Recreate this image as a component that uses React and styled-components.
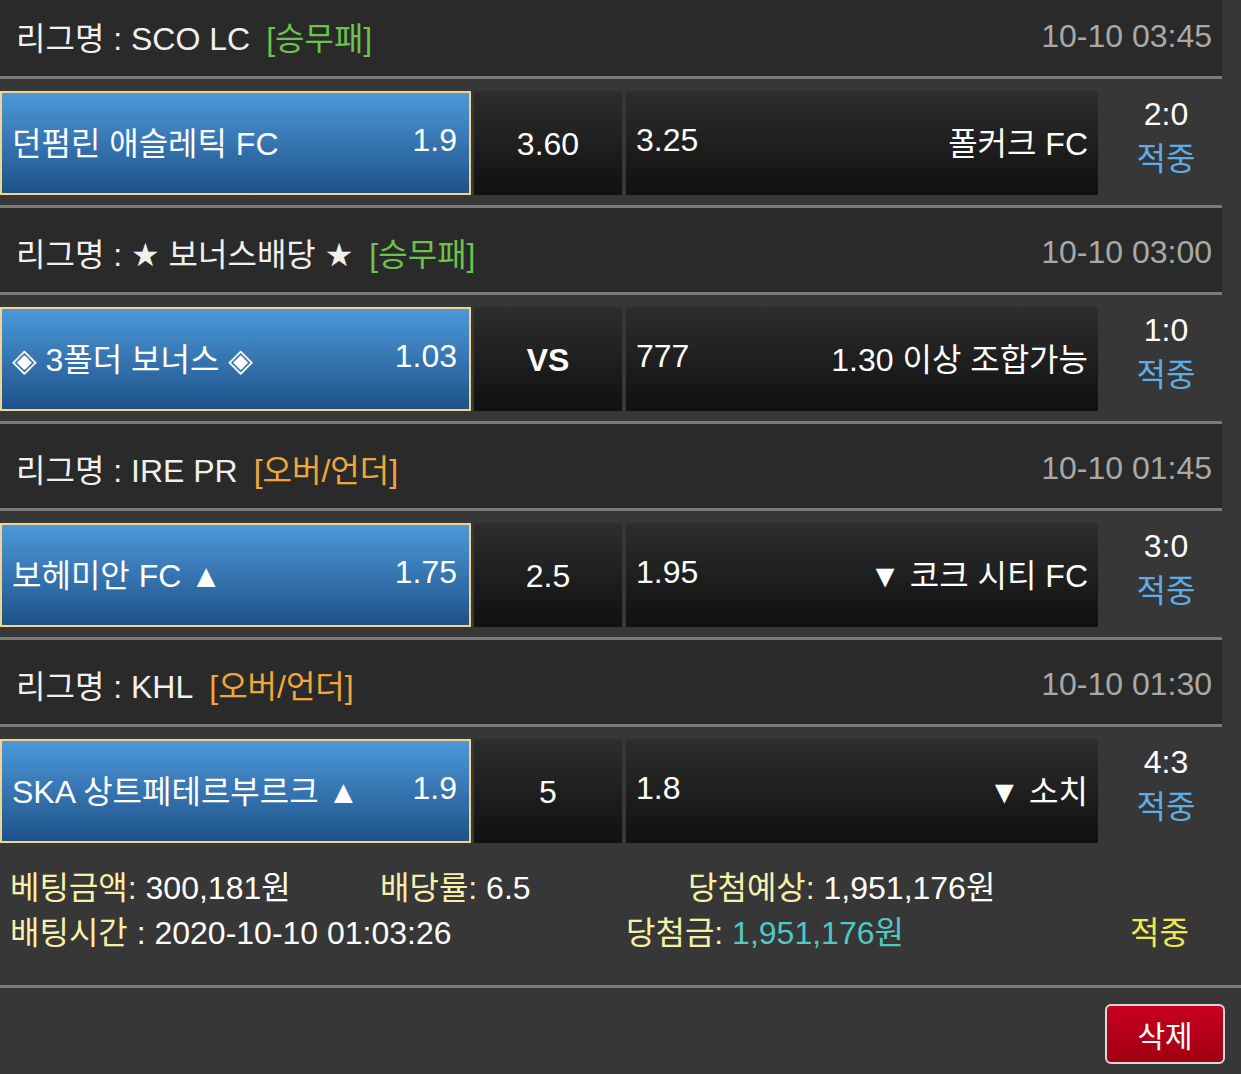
import styled, { createGlobalStyle } from "styled-components";

const FONT = `"Liberation Sans", "DejaVu Sans", "Noto Sans CJK KR", sans-serif`;

const GlobalStyle = createGlobalStyle`
   html, body {
      margin: 0;
      padding: 0;
      background: #373737;
   }
   body {
      font-family: ${FONT};
      color: #f2f2f2;
      overflow: hidden;
   }
`

const Page = styled.div`
   width: 1241px;
   height: 1074px;
   overflow: hidden;
   background: #373737;
`

const List = styled.div`
   width: 1222px;
   margin-top: -8px;
`

const LeagueHeader = styled.div`
   display: flex;
   align-items: center;
   justify-content: space-between;
   height: 87px;
   box-sizing: border-box;
   padding: 4px 10px 0 16px;
   background: #2a2a2a;
   border-bottom: 3px solid #7a7a7a;
   font-size: 32px;
`

const LeagueName = styled.div`
   color: #f0f0f0;
   white-space: nowrap;
`

const Tag = styled.span`
   margin-left: 16px;
   color: ${props => props.$color};
`

const DateText = styled.div`
   color: #a9a9a9;
`

const BetRow = styled.div`
   display: flex;
   height: ${props => (props.$last ? 126 : 129)}px;
   box-sizing: border-box;
   padding: 12px 0 10px;
   border-bottom: ${props => (props.$last ? "none" : "3px solid #7a7a7a")};
   font-size: 32px;
`

const HomeCell = styled.div`
   display: flex;
   align-items: center;
   justify-content: space-between;
   width: 471px;
   box-sizing: border-box;
   padding: 0 12px 5px 10px;
   background: linear-gradient(#4d98d9, #1e5289);
   border: 2px solid #f3d48a;
   color: #ffffff;
   white-space: nowrap;
`

const DrawCell = styled.div`
   display: flex;
   align-items: center;
   justify-content: center;
   width: 148px;
   margin-left: 3px;
   padding-top: 2px;
   box-sizing: border-box;
   background: linear-gradient(#2e2e2e, #101010);
   color: #ffffff;
   font-weight: ${props => (props.$bold ? "bold" : "normal")};
`

const AwayCell = styled.div`
   display: flex;
   align-items: center;
   justify-content: space-between;
   width: 472px;
   margin-left: 4px;
   box-sizing: border-box;
   padding: 0 10px 5px;
   background: linear-gradient(#2e2e2e, #101010);
   color: #ffffff;
   white-space: nowrap;
`

const ResultCol = styled.div`
   display: flex;
   flex-direction: column;
   align-items: center;
   justify-content: center;
   width: 124px;
   padding: 0 0 13px 12px;
   box-sizing: border-box;
   line-height: 45px;
`

const Score = styled.div`
   color: #ffffff;
`

const Hit = styled.div`
   color: #5cade8;
`

const Footer = styled.div`
   height: 135px;
   box-sizing: border-box;
   padding: 13px 0 0 10px;
   border-bottom: 3px solid #7a7a7a;
   font-size: 32px;
   line-height: 45px;
`

const InfoLine = styled.div`
   display: flex;
   white-space: nowrap;
`

const InfoItem = styled.div`
   width: ${props => props.$width}px;
   flex-shrink: 0;
`

const Label = styled.span`
   color: #f6f0a8;
`

const Value = styled.span`
   color: ${props => props.$color || "#ffffff"};
`

const BottomBar = styled.div`
   display: flex;
   justify-content: flex-end;
   padding: 16px 16px 0 0;
`

const DeleteButton = styled.button`
   width: 120px;
   height: 60px;
   border: 2px solid #d9d9d9;
   border-radius: 6px;
   background: linear-gradient(#c8001d, #a10013);
   color: #ffffff;
   font-family: ${FONT};
   font-size: 30px;
   cursor: pointer;
`

const GREEN = "#6cc24a";
const ORANGE = "#f0a73a";

const bets = [
   { league: "SCO LC", tag: "[승무패]", tagColor: GREEN, date: "10-10 03:45", home: "던펌린 애슬레틱 FC", homeOdds: "1.9", draw: "3.60", awayOdds: "3.25", away: "폴커크 FC", score: "2:0" },
   { league: "★ 보너스배당 ★", tag: "[승무패]", tagColor: GREEN, date: "10-10 03:00", home: "◈ 3폴더 보너스 ◈", homeOdds: "1.03", draw: "VS", bold: true, awayOdds: "777", away: "1.30 이상 조합가능", score: "1:0" },
   { league: "IRE PR", tag: "[오버/언더]", tagColor: ORANGE, date: "10-10 01:45", home: "보헤미안 FC ▲", homeOdds: "1.75", draw: "2.5", awayOdds: "1.95", away: "▼ 코크 시티 FC", score: "3:0" },
   { league: "KHL", tag: "[오버/언더]", tagColor: ORANGE, date: "10-10 01:30", home: "SKA 상트페테르부르크 ▲", homeOdds: "1.9", draw: "5", awayOdds: "1.8", away: "▼ 소치", score: "4:3" },
];

export default function App() {
   return (
      <Page>
         <GlobalStyle />
         <List>
            {bets.map((b, i) => (
               <div key={i}>
                  <LeagueHeader>
                     <LeagueName>
                        리그명 : {b.league}
                        <Tag $color={b.tagColor}>{b.tag}</Tag>
                     </LeagueName>
                     <DateText>{b.date}</DateText>
                  </LeagueHeader>
                  <BetRow $last={i === bets.length - 1}>
                     <HomeCell>
                        <span>{b.home}</span>
                        <span>{b.homeOdds}</span>
                     </HomeCell>
                     <DrawCell $bold={b.bold}>{b.draw}</DrawCell>
                     <AwayCell>
                        <span>{b.awayOdds}</span>
                        <span>{b.away}</span>
                     </AwayCell>
                     <ResultCol>
                        <Score>{b.score}</Score>
                        <Hit>적중</Hit>
                     </ResultCol>
                  </BetRow>
               </div>
            ))}
         </List>
         <Footer>
            <InfoLine>
               <InfoItem $width={370}>
                  <Label>베팅금액:</Label> <Value>300,181원</Value>
               </InfoItem>
               <InfoItem $width={308}>
                  <Label>배당률:</Label> <Value>6.5</Value>
               </InfoItem>
               <InfoItem $width={400}>
                  <Label>당첨예상:</Label> <Value>1,951,176원</Value>
               </InfoItem>
            </InfoLine>
            <InfoLine>
               <InfoItem $width={616}>
                  <Label>배팅시간</Label> <Value>: 2020-10-10 01:03:26</Value>
               </InfoItem>
               <InfoItem $width={504}>
                  <Label>당첨금:</Label> <Value $color="#4fc9c4">1,951,176원</Value>
               </InfoItem>
               <InfoItem $width={80}>
                  <Value $color="#f2e84a">적중</Value>
               </InfoItem>
            </InfoLine>
         </Footer>
         <BottomBar>
            <DeleteButton>삭제</DeleteButton>
         </BottomBar>
      </Page>
   );
}
